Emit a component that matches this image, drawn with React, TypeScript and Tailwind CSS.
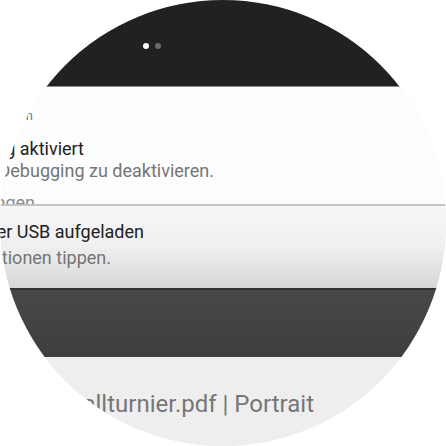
import React from 'react';

const font = { fontFamily: 'Roboto, "Noto Sans", sans-serif' };

function Line({ right, className, children }: { right: string; className: string; children: React.ReactNode }) {
  return (
    <div className={`flex justify-end ${right}`}>
      <span className={`whitespace-nowrap ${className}`}>{children}</span>
    </div>
  );
}

export default function App() {
  return (
    <div className="w-[446px] h-[446px] bg-white" style={font}>
      <div className="w-full h-full rounded-full overflow-hidden flex flex-col bg-[#eeeeee]">
        {/* ambient top bar with page dots */}
        <div className="h-[87px] shrink-0 bg-[#212121] border-b border-[#8c8c8c] flex items-start">
          <div className="flex gap-[6px] ml-[143px] mt-[43px]">
            <span className="w-[6px] h-[6px] rounded-full bg-white" />
            <span className="w-[6px] h-[6px] rounded-full bg-[#6a6a6a]" />
          </div>
        </div>

        {/* notification: debugging */}
        <div className="h-[117px] shrink-0 bg-[#fdfdfd] overflow-hidden">
          <Line right="w-[33px] mt-[20px] h-[18px]" className="text-[13px] leading-[18px] text-[#607d8b]">
            Android-System
          </Line>
          <Line right="w-[84px] mt-[13px]" className="text-[18px] leading-[22px] text-[#212121]">
            USB-Debugging aktiviert
          </Line>
          <Line right="w-[214px]" className="text-[18px] leading-[22px] text-[#757575]">
            Tippen, um USB-Debugging zu deaktivieren.
          </Line>
          <Line right="w-[35px] mt-[10px]" className="text-[18px] leading-[22px] text-[#8a8a8a]">
            Benachrichtigungen
          </Line>
        </div>

        {/* notification: USB charging */}
        <div className="h-[84px] shrink-0 border-t-2 border-[#c4c4c4] bg-gradient-to-b from-[#f7f7f7] via-[#efefef] to-[#d7d7d7] overflow-hidden">
          <Line right="w-[144px] mt-[15px]" className="text-[18px] leading-[22px] text-[#212121]">
            Gerät wird über USB aufgeladen
          </Line>
          <Line right="w-[111px] mt-[4px]" className="text-[18px] leading-[22px] text-[#757575]">
            Für weitere Optionen tippen.
          </Line>
        </div>

        {/* dark card */}
        <div className="h-[69px] shrink-0 border-t-2 border-[#343434] bg-gradient-to-b from-[#484848] to-[#3e3e3e]" />

        {/* file name */}
        <div className="flex-1 bg-[#eeeeee] pt-[32px]">
          <Line right="w-[314px]" className="text-[24px] leading-[30px] text-[#767676]">
            Fußballturnier.pdf | Portrait
          </Line>
        </div>
      </div>
    </div>
  );
}
